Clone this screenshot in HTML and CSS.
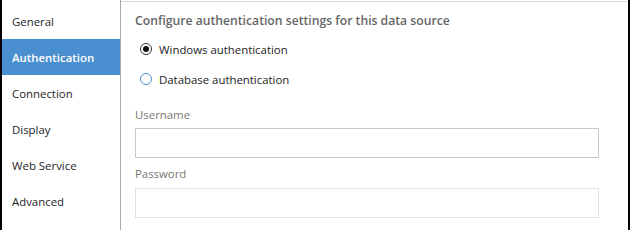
FILE: index.html
```html
<!DOCTYPE html>
<html>
<head>
<meta charset="utf-8">
<link rel="stylesheet" href="styles.css">
</head>
<body>
<div class="frame">
  <nav class="sidebar">
    <div class="item">General</div>
    <div class="item active">Authentication</div>
    <div class="item">Connection</div>
    <div class="item">Display</div>
    <div class="item">Web Service</div>
    <div class="item">Advanced</div>
  </nav>
  <main class="content">
    <h1 class="title">Configure authentication settings for this data source</h1>
    <label class="radio"><span class="dot checked"></span>Windows authentication</label>
    <label class="radio"><span class="dot"></span>Database authentication</label>
    <div class="field">
      <div class="label">Username</div>
      <div class="input"></div>
    </div>
    <div class="field">
      <div class="label">Password</div>
      <div class="input light"></div>
    </div>
  </main>
</div>
</body>
</html>
```
FILE: styles.css
```css
html, body { margin: 0; padding: 0; background: #fff; }
body { font-family: "Open Sans", "Noto Sans", sans-serif; font-size: 11.4px; color: #222; }
.frame {
  width: 630px; height: 230px; box-sizing: border-box;
  border-left: 2px solid #000; border-right: 2px solid #000;
  display: flex;
}
.sidebar {
  width: 118px; flex: none; padding-top: 3px;
  border-right: 1px solid #a8a8a8;
}
.item {
  height: 36px; display: flex; align-items: center; padding-left: 10px;
  color: #1e1e1e;
}
.item.active { background: #4a8fd0; color: #fff; font-weight: 600; }
.content {
  flex: 1; border-top: 1px solid #dadada; margin-top: 1px;
  padding: 10px 0 0 14px; box-sizing: border-box;
}
.title { margin: 0 0 4px; font-size: 12.2px; font-weight: 600; color: #666; line-height: 18px; }
.radio { display: flex; align-items: center; height: 30px; padding-left: 5px; color: #222; }
.dot {
  width: 10px; height: 10px; border: 1px solid #4a8fd0; border-radius: 50%;
  margin-right: 7px; position: relative; box-sizing: content-box;
}
.dot.checked { border-color: #333; }
.dot.checked::after {
  content: ""; position: absolute; left: 2px; top: 2px; width: 6px; height: 6px;
  border-radius: 50%; background: #111;
}
.field { margin-top: 13px; }
.field + .field { margin-top: 8px; }
.label { color: #777; line-height: 16px; margin-bottom: 5px; }
.field + .field .label { margin-bottom: 6px; }
.input { width: 462px; height: 28px; border: 1px solid #c8c8c8; }
.input.light { border-color: #e0e0e0; }
```
